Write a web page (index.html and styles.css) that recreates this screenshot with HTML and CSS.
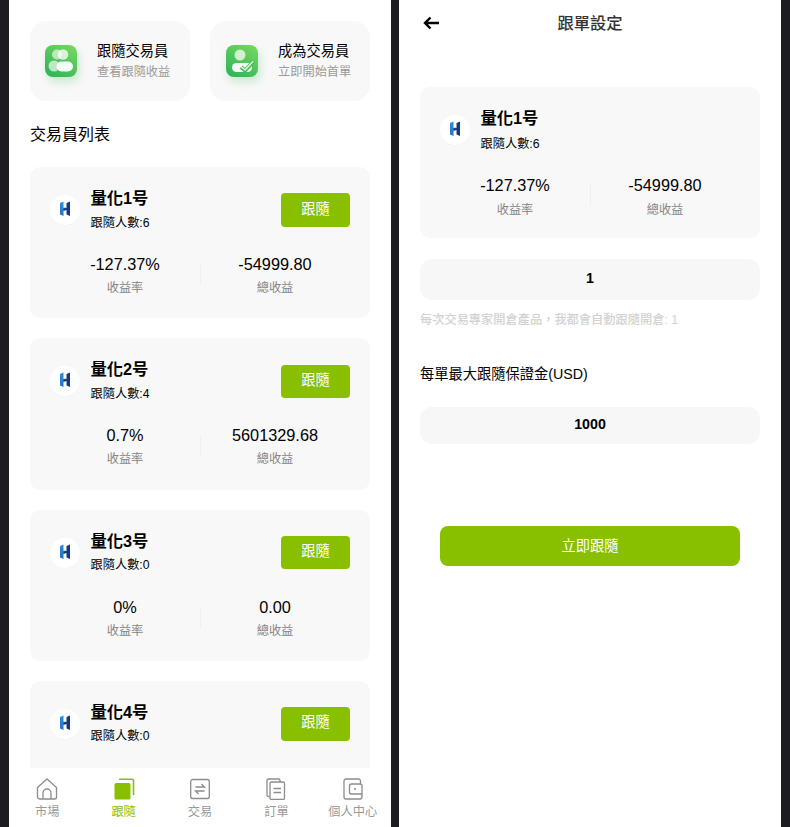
FILE: index.html
```html
<!DOCTYPE html>
<html lang="zh-Hant">
<head>
<meta charset="utf-8">
<title>跟單</title>
<link rel="stylesheet" href="styles.css">
</head>
<body>
<svg class="defs" width="0" height="0" aria-hidden="true">
  <defs>
    <linearGradient id="tile" x1="0.8" y1="0" x2="0.2" y2="1">
      <stop offset="0" stop-color="#74d65e"/>
      <stop offset="1" stop-color="#2fb558"/>
    </linearGradient>
    <linearGradient id="hl" x1="0" y1="0" x2="0" y2="1">
      <stop offset="0" stop-color="#2f8fd8"/>
      <stop offset="1" stop-color="#2a6fc0"/>
    </linearGradient>
    <symbol id="logo" viewBox="0 0 30 30">
      <path d="M10 8l3.500-1.500v6.500l2.500-.5v2.500l-2.500.7v5.300l-3.500-1.500z" fill="url(#hl)"/>
      <path d="M16.500 8l3.500-1.500v14.500l-3.500-1.500v-4.500l-3 .8v-2.200l3-.6z" fill="#17387f"/>
    </symbol>
  </defs>
</svg>

<main class="panel">
  <div class="scroll">
    <div class="shortcuts">
      <div class="shortcut">
        <svg class="tile" viewBox="0 0 32 32">
          <rect width="32" height="32" rx="8" fill="url(#tile)"/>
          <circle cx="12" cy="9.500" r="5" fill="#fff" opacity=".6"/>
          <circle cx="18" cy="9.500" r="5.300" fill="#fff" opacity=".75"/>
          <circle cx="9" cy="21" r="5.500" fill="#fff" opacity=".65"/>
          <rect x="11.500" y="16.500" width="16.500" height="10" rx="5" fill="#fff" opacity=".95"/>
        </svg>
        <div class="shortcut-text">
          <div class="shortcut-title">跟隨交易員</div>
          <div class="shortcut-sub">查看跟隨收益</div>
        </div>
      </div>
      <div class="shortcut shortcut-alt">
        <svg class="tile" viewBox="0 0 32 32">
          <rect width="32" height="32" rx="8" fill="url(#tile)"/>
          <circle cx="14" cy="10" r="5.500" fill="#fff" opacity=".72"/>
          <rect x="6" y="18" width="20" height="9" rx="4.500" fill="#fff" opacity=".95"/>
          <path d="M15 22l4 3.500 8-8.500" fill="none" stroke="#3dbb5b" stroke-width="4"/>
          <path d="M15 21.500l4 3.500 8-8.500" fill="none" stroke="#eaf8e6" stroke-width="1.600"/>
        </svg>
        <div class="shortcut-text">
          <div class="shortcut-title">成為交易員</div>
          <div class="shortcut-sub">立即開始首單</div>
        </div>
      </div>
    </div>

    <h2 class="list-title">交易員列表</h2>

    <div class="trader">
      <div class="trader-head">
        <span class="avatar"><svg class="logo"><use href="#logo"/></svg></span>
        <div class="trader-info">
          <div class="trader-name">量化1号</div>
          <div class="trader-count">跟隨人數:6</div>
        </div>
        <button class="follow">跟隨</button>
      </div>
      <div class="stats">
        <div class="stat"><div class="stat-value">-127.37%</div><div class="stat-label">收益率</div></div>
        <div class="stat stat-right"><div class="stat-value">-54999.80</div><div class="stat-label">總收益</div></div>
      </div>
    </div>

    <div class="trader">
      <div class="trader-head">
        <span class="avatar"><svg class="logo"><use href="#logo"/></svg></span>
        <div class="trader-info">
          <div class="trader-name">量化2号</div>
          <div class="trader-count">跟隨人數:4</div>
        </div>
        <button class="follow">跟隨</button>
      </div>
      <div class="stats">
        <div class="stat"><div class="stat-value">0.7%</div><div class="stat-label">收益率</div></div>
        <div class="stat stat-right"><div class="stat-value">5601329.68</div><div class="stat-label">總收益</div></div>
      </div>
    </div>

    <div class="trader">
      <div class="trader-head">
        <span class="avatar"><svg class="logo"><use href="#logo"/></svg></span>
        <div class="trader-info">
          <div class="trader-name">量化3号</div>
          <div class="trader-count">跟隨人數:0</div>
        </div>
        <button class="follow">跟隨</button>
      </div>
      <div class="stats">
        <div class="stat"><div class="stat-value">0%</div><div class="stat-label">收益率</div></div>
        <div class="stat stat-right"><div class="stat-value">0.00</div><div class="stat-label">總收益</div></div>
      </div>
    </div>

    <div class="trader">
      <div class="trader-head">
        <span class="avatar"><svg class="logo"><use href="#logo"/></svg></span>
        <div class="trader-info">
          <div class="trader-name">量化4号</div>
          <div class="trader-count">跟隨人數:0</div>
        </div>
        <button class="follow">跟隨</button>
      </div>
    </div>
  </div>

  <nav class="tabbar">
    <a class="tab">
      <svg class="tab-icon" viewBox="0 0 22 22" fill="none" stroke="#8c8c8c" stroke-width="1.300">
        <path d="M1.500 9.500L11 1l9.500 8.500V19a2 2 0 0 1-2 2h-15a2 2 0 0 1-2-2z" stroke-linejoin="round"/>
        <path d="M7 21v-6a4 4 0 0 1 8 0v6"/>
      </svg>
      <span>市場</span>
    </a>
    <a class="tab tab-active">
      <svg class="tab-icon" viewBox="0 0 22 22">
        <path d="M6 1.200h13a1.500 1.500 0 0 1 1.500 1.500V17" fill="none" stroke="#88c000" stroke-width="1.600"/>
        <rect x="1.500" y="5" width="16" height="16.500" rx="1.500" fill="#88c000"/>
      </svg>
      <span>跟隨</span>
    </a>
    <a class="tab">
      <svg class="tab-icon" viewBox="0 0 22 22" fill="none" stroke="#8c8c8c" stroke-width="1.300">
        <rect x="1.700" y="1.500" width="18.600" height="19" rx="2"/>
        <path d="M6.500 9h9l-3-3M15.500 13h-9l3 3"/>
      </svg>
      <span>交易</span>
    </a>
    <a class="tab">
      <svg class="tab-icon" viewBox="0 0 22 22" fill="none" stroke="#8c8c8c" stroke-width="1.300">
        <path d="M4.500 18.500H3.500a1.500 1.500 0 0 1-1.500-1.500V2.500A1.500 1.500 0 0 1 3.500 1h10A1.500 1.500 0 0 1 15 2.500V4"/>
        <rect x="5" y="4" width="14.500" height="17.500" rx="1.500"/>
        <path d="M8.500 10.500h7.500M8.500 14.500h7.500"/>
      </svg>
      <span>訂單</span>
    </a>
    <a class="tab">
      <svg class="tab-icon" viewBox="0 0 22 22" fill="none" stroke="#8c8c8c" stroke-width="1.300">
        <path d="M18.500 6V3a2 2 0 0 0-2-2H4a2 2 0 0 0-2 2v16a2 2 0 0 0 2 2h14a2 2 0 0 0 2-2V8a2 2 0 0 0-2-2H9.500a2 2 0 0 0-2 2v6a2 2 0 0 0 2 2H20"/>
        <circle cx="13" cy="11" r="1" fill="#8c8c8c" stroke="none"/>
      </svg>
      <span>個人中心</span>
    </a>
  </nav>
</main>

<main class="panel panel-form">
  <header class="topbar">
    <svg class="back" viewBox="0 0 16 14" fill="none" stroke="#000" stroke-width="2.400">
      <path d="M16 7H2M7.500 1.500L2 7l5.500 5.500"/>
    </svg>
    <h1 class="topbar-title">跟單設定</h1>
  </header>

  <div class="trader trader-static">
    <div class="trader-head">
      <span class="avatar"><svg class="logo"><use href="#logo"/></svg></span>
      <div class="trader-info">
        <div class="trader-name">量化1号</div>
        <div class="trader-count">跟隨人數:6</div>
      </div>
    </div>
    <div class="stats">
      <div class="stat"><div class="stat-value">-127.37%</div><div class="stat-label">收益率</div></div>
      <div class="stat stat-right"><div class="stat-value">-54999.80</div><div class="stat-label">總收益</div></div>
    </div>
  </div>

  <div class="field field-tall">1</div>
  <p class="hint">每次交易專家開倉產品，我都會自動跟隨開倉: 1</p>
  <p class="field-label">每單最大跟隨保證金(USD)</p>
  <div class="field">1000</div>
  <button class="submit">立即跟隨</button>
</main>
</body>
</html>
```
FILE: styles.css
```css
* { box-sizing: border-box; }

html, body { height: 100%; }

body {
  margin: 0;
  padding: 0 9px;
  background: #1c1c21;
  display: flex;
  gap: 8px;
  overflow: hidden;
  font-family: "Liberation Sans", "Noto Sans CJK SC", sans-serif;
  color: #000;
}

.defs { position: absolute; }

.panel {
  width: 382px;
  height: 827px;
  background: #fff;
  display: flex;
  flex-direction: column;
  overflow: hidden;
}

.scroll {
  flex: 1;
  min-height: 0;
  overflow: hidden;
  padding: 21px 21px 0;
}

.shortcuts {
  display: grid;
  grid-template-columns: 160px 160px;
  gap: 20px;
}

.shortcut {
  height: 80px;
  border-radius: 16px;
  background: #f8f8f8;
  padding: 0 0 0 15px;
  display: flex;
  align-items: center;
  gap: 20px;
}

.shortcut-alt { padding-left: 16px; }

.tile {
  width: 32px;
  height: 32px;
  flex: none;
  margin-top: -1px;
  filter: drop-shadow(2px 5px 4px rgba(60, 190, 90, .25));
}

.shortcut-text { margin-top: -1px; }

.shortcut-title {
  font-size: 14.26px;
  line-height: 20px;
  color: #000;
}

.shortcut-sub {
  font-size: 12.22px;
  line-height: 18px;
  margin-top: 2px;
  color: #9a9a9a;
}

.list-title {
  margin: 23px 0 21px;
  font-size: 16px;
  line-height: 22px;
  font-weight: 400;
}

.trader {
  height: 151.33px;
  margin-bottom: 20px;
  border-radius: 10px;
  background: #f8f8f8;
  padding: 20px 20px 0;
}

.trader-head {
  display: flex;
  align-items: center;
  height: 46px;
}

.avatar {
  width: 30px;
  height: 30px;
  flex: none;
  border-radius: 50%;
  background: #fff;
  box-shadow: 0 1px 1px rgba(0, 0, 0, .02);
  margin-right: 10.5px;
}

.logo {
  display: block;
  width: 30px;
  height: 30px;
}

.trader-info {
  flex: 1;
  align-self: flex-start;
  margin-top: -1px;
}

.trader-name {
  font-size: 16.3px;
  line-height: 24px;
  font-weight: 700;
}

.trader-count {
  font-size: 12.22px;
  line-height: 18px;
  margin-top: 3.5px;
}

.follow {
  width: 69px;
  height: 33.5px;
  border: 0;
  padding: 0 0 3px;
  border-radius: 4px;
  background: #88c000;
  color: #fff;
  font: inherit;
  font-size: 14.26px;
  line-height: 16px;
}

.stats {
  display: grid;
  grid-template-columns: 1fr 1fr;
  margin-top: 19px;
}

.stat {
  text-align: center;
  position: relative;
}

.stat-right::before {
  content: "";
  position: absolute;
  left: 0;
  top: 12px;
  height: 21px;
  width: 1px;
  background: #efefef;
}

.stat-value {
  font-size: 16.3px;
  line-height: 24px;
}

.stat-label {
  font-size: 12.22px;
  line-height: 18px;
  margin-top: 3px;
  color: #858585;
}

.tabbar {
  height: 59px;
  flex: none;
  background: #fff;
  display: grid;
  grid-template-columns: repeat(5, 1fr);
  padding-top: 10px;
}

.tab {
  display: flex;
  flex-direction: column;
  align-items: center;
  font-size: 12.22px;
  line-height: 18px;
  color: #999;
}

.tab-active { color: #88c000; }

.tab-icon {
  width: 22px;
  height: 22px;
  margin-bottom: 3px;
}

.panel-form { padding: 0 21px; }

.topbar {
  height: 43px;
  flex: none;
  margin-bottom: 44px;
  display: flex;
  align-items: center;
  justify-content: center;
  position: relative;
}

.back {
  position: absolute;
  left: 3px;
  top: 16px;
  width: 16px;
  height: 14px;
}

.topbar-title {
  margin: 0;
  font-size: 16.3px;
  font-weight: 500;
  color: #333;
}

.trader-static {
  flex: none;
  margin-bottom: 21px;
}

.trader-static .trader-count { margin-top: 5px; }

.trader-static .stats { margin-top: 20px; }

.trader-static .stat-label { margin-top: 4px; }

.field {
  flex: none;
  height: 37px;
  border-radius: 12px;
  background: #f7f7f7;
  display: flex;
  align-items: center;
  justify-content: center;
  padding-bottom: 3px;
  font-size: 14.26px;
  font-weight: 700;
}

.field-tall { height: 41px; }

.hint {
  margin: 11px 0 0;
  font-size: 12.22px;
  line-height: 18px;
  font-weight: 500;
  color: #d2d2d2;
}

.field-label {
  margin: 35px 0 23px;
  font-size: 14.26px;
  line-height: 20px;
}

.submit {
  flex: none;
  width: 300px;
  height: 40px;
  margin: 82px auto 0;
  border: 0;
  padding: 0;
  border-radius: 8px;
  background: #88c000;
  color: #fff;
  font: inherit;
  font-size: 14.26px;
  line-height: 16px;
}
```
